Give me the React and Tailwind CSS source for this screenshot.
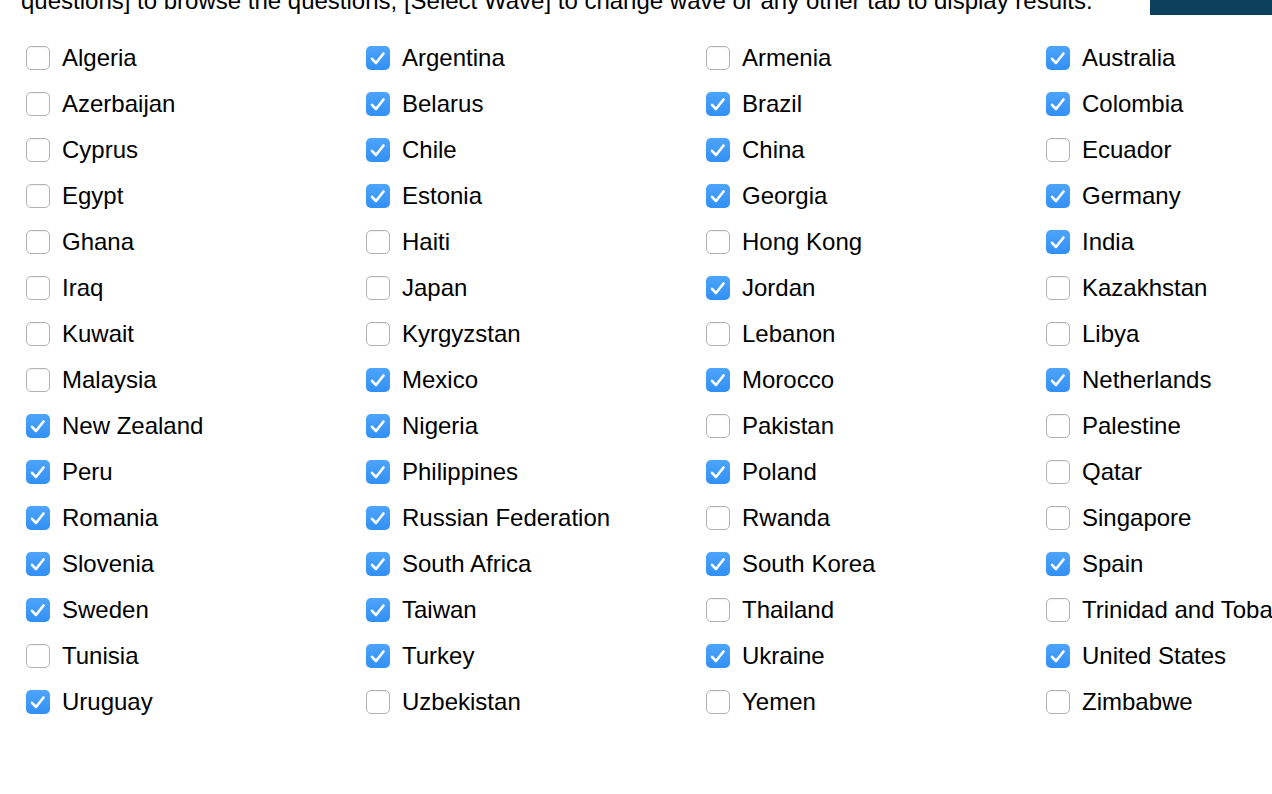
import React from "react";

const countries = [
  ["Algeria", 0], ["Argentina", 1], ["Armenia", 0], ["Australia", 1],
  ["Azerbaijan", 0], ["Belarus", 1], ["Brazil", 1], ["Colombia", 1],
  ["Cyprus", 0], ["Chile", 1], ["China", 1], ["Ecuador", 0],
  ["Egypt", 0], ["Estonia", 1], ["Georgia", 1], ["Germany", 1],
  ["Ghana", 0], ["Haiti", 0], ["Hong Kong", 0], ["India", 1],
  ["Iraq", 0], ["Japan", 0], ["Jordan", 1], ["Kazakhstan", 0],
  ["Kuwait", 0], ["Kyrgyzstan", 0], ["Lebanon", 0], ["Libya", 0],
  ["Malaysia", 0], ["Mexico", 1], ["Morocco", 1], ["Netherlands", 1],
  ["New Zealand", 1], ["Nigeria", 1], ["Pakistan", 0], ["Palestine", 0],
  ["Peru", 1], ["Philippines", 1], ["Poland", 1], ["Qatar", 0],
  ["Romania", 1], ["Russian Federation", 1], ["Rwanda", 0], ["Singapore", 0],
  ["Slovenia", 1], ["South Africa", 1], ["South Korea", 1], ["Spain", 1],
  ["Sweden", 1], ["Taiwan", 1], ["Thailand", 0], ["Trinidad and Tobago", 0],
  ["Tunisia", 0], ["Turkey", 1], ["Ukraine", 1], ["United States", 1],
  ["Uruguay", 1], ["Uzbekistan", 0], ["Yemen", 0], ["Zimbabwe", 0],
];

function Box({ checked }) {
  if (checked) {
    return (
      <span className="flex h-[24px] w-[24px] shrink-0 items-center justify-center rounded-[5px] bg-gradient-to-b from-[#4da4fb] to-[#318ff5]">
        <svg width="24" height="24" viewBox="0 0 24 24" fill="none">
          <path d="M6 12.8l4 4.2L17.5 7.5" stroke="white" strokeWidth="2.6" strokeLinecap="round" strokeLinejoin="round" />
        </svg>
      </span>
    );
  }
  return <span className="h-[24px] w-[24px] shrink-0 rounded-[5px] border border-[#b3b3b3] bg-white shadow-[inset_0_1px_1px_rgba(0,0,0,0.06)]" />;
}

export default function App() {
  return (
    <div className="h-[794px] w-[1272px] overflow-hidden bg-white text-black font-['Liberation_Sans',Arial,sans-serif]">
      <div className="-mt-[13px] flex h-[28px] items-start">
        <p className="whitespace-nowrap pl-[21px] text-[24px] leading-[28px]">
          questions] to browse the questions, [Select Wave] to change wave or any other tab to display results.
        </p>
        <div className="ml-auto flex h-[28px] w-[122px] shrink-0 justify-center bg-[#0e3f5c] text-[14px] leading-[14px] text-white">
          <span className="-mt-[10px] pl-[30px]">Ab</span>
        </div>
      </div>
      <div className="mt-[20px] grid grid-cols-[340px_340px_340px_340px] pl-[26px]">
        {countries.map(([name, checked]) => (
          <label key={name} className="flex h-[46px] items-center gap-[12px] whitespace-nowrap text-[24px]">
            <Box checked={checked} />
            <span>{name}</span>
          </label>
        ))}
      </div>
    </div>
  );
}
